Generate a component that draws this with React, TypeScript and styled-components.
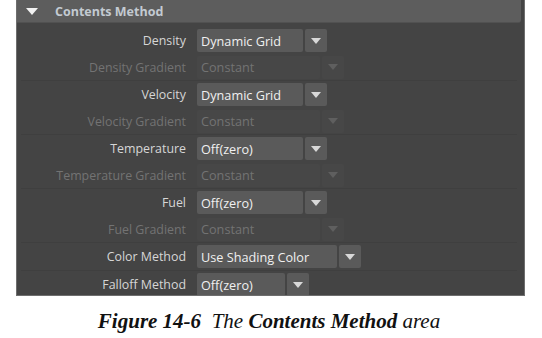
import React from 'react'
import styled, { createGlobalStyle } from 'styled-components'

const GlobalStyle = createGlobalStyle`
  html, body {
    margin: 0;
    padding: 0;
    background: #ffffff;
  }
`

type Attr = {
  label: string
  value: string
  width: number
  disabled?: boolean
}

const groups: Attr[][] = [
  [
    { label: 'Density', value: 'Dynamic Grid', width: 106 },
    { label: 'Density Gradient', value: 'Constant', width: 123, disabled: true },
  ],
  [
    { label: 'Velocity', value: 'Dynamic Grid', width: 106 },
    { label: 'Velocity Gradient', value: 'Constant', width: 123, disabled: true },
  ],
  [
    { label: 'Temperature', value: 'Off(zero)', width: 106 },
    { label: 'Temperature Gradient', value: 'Constant', width: 123, disabled: true },
  ],
  [
    { label: 'Fuel', value: 'Off(zero)', width: 106 },
    { label: 'Fuel Gradient', value: 'Constant', width: 123, disabled: true },
  ],
  [{ label: 'Color Method', value: 'Use Shading Color', width: 140 }],
  [{ label: 'Falloff Method', value: 'Off(zero)', width: 88 }],
]

const Arrow = ({ disabled }: { disabled?: boolean }) => (
  <svg width="10" height="6" viewBox="0 0 10 6">
    <path d="M0 0 L10 0 L5 6 Z" fill={disabled ? '#5f5f5f' : '#d8d8d8'} />
  </svg>
)

const App = () => {
  return (
    <Page>
      <GlobalStyle />
      <Panel>
        <Header>
          <HeaderArrow>
            <svg width="12" height="7" viewBox="0 0 12 7">
              <path d="M0 0 L12 0 L6 7 Z" fill="#f2f2f2" />
            </svg>
          </HeaderArrow>
          <HeaderTitle>Contents Method</HeaderTitle>
        </Header>
        <Body>
          {groups.map((group, gi) => (
            <Group key={gi}>
              {group.map((attr) => (
                <Row key={attr.label} $tall={!attr.disabled}>
                  <Label $disabled={attr.disabled}>{attr.label}</Label>
                  <Dropdown>
                    <Field $disabled={attr.disabled} style={{ width: attr.width }}>
                      {attr.value}
                    </Field>
                    <ArrowBox $disabled={attr.disabled}>
                      <Arrow disabled={attr.disabled} />
                    </ArrowBox>
                  </Dropdown>
                </Row>
              ))}
              {gi < groups.length - 1 && <Separator />}
            </Group>
          ))}
        </Body>
      </Panel>
      <Caption>
        <b>Figure 14-6</b>&nbsp;&nbsp;The <b>Contents Method</b> area
      </Caption>
    </Page>
  )
}

const Page = styled.div`
  width: 542px;
  height: 338px;
  overflow: hidden;
`

const Panel = styled.div`
  margin-left: 16px;
  width: 507px;
  height: 295px;
  background: #444444;
  border: 1px solid #6e6e6e;
  border-top: none;
  overflow: hidden;
  font-family: 'Open Sans', 'Noto Sans', sans-serif;
  font-size: 12.4px;
`

const Header = styled.div`
  display: flex;
  align-items: center;
  height: 22px;
  width: 504px;
  background: #5d5d5d;
  border-radius: 0 0 3px 0;
  border-bottom: 1px solid #515151;
`

const HeaderArrow = styled.div`
  display: flex;
  margin-left: 9px;
  width: 29px;
`

const HeaderTitle = styled.div`
  color: #c3cad1;
  font-weight: 700;
  font-size: 12.5px;
`

const Body = styled.div`
  padding-top: 4px;
`

const Group = styled.div`
  display: flex;
  flex-direction: column;
`

const Row = styled.div<{ $tall?: boolean }>`
  display: flex;
  align-items: center;
  height: ${(p) => (p.$tall ? 27 : 26)}px;
`

const Label = styled.div<{ $disabled?: boolean }>`
  width: 169px;
  padding-right: 11px;
  text-align: right;
  color: ${(p) => (p.$disabled ? '#737373' : '#d6d6d6')};
  white-space: nowrap;
`

const Dropdown = styled.div`
  display: flex;
  gap: 2px;
  height: 23px;
`

const Field = styled.div<{ $disabled?: boolean }>`
  box-sizing: border-box;
  display: flex;
  align-items: center;
  padding-left: 4px;
  border-radius: 2px;
  background: ${(p) => (p.$disabled ? '#474747' : '#5a5a5a')};
  color: ${(p) => (p.$disabled ? '#737373' : '#f0f0f0')};
  font-size: 12.7px;
  white-space: nowrap;
`

const ArrowBox = styled.div<{ $disabled?: boolean }>`
  display: flex;
  align-items: center;
  justify-content: center;
  width: 22px;
  border-radius: 2px;
  background: ${(p) => (p.$disabled ? '#474747' : '#5a5a5a')};
`

const Separator = styled.div`
  height: 1px;
  margin: 0 7px 0 4px;
  background: #3f3f3f;
`

const Caption = styled.div`
  margin-top: 13px;
  text-align: center;
  padding-right: 4px;
  font-family: 'Liberation Serif', 'DejaVu Serif', serif;
  font-style: italic;
  font-size: 21px;
  color: #111;
`

export default App
